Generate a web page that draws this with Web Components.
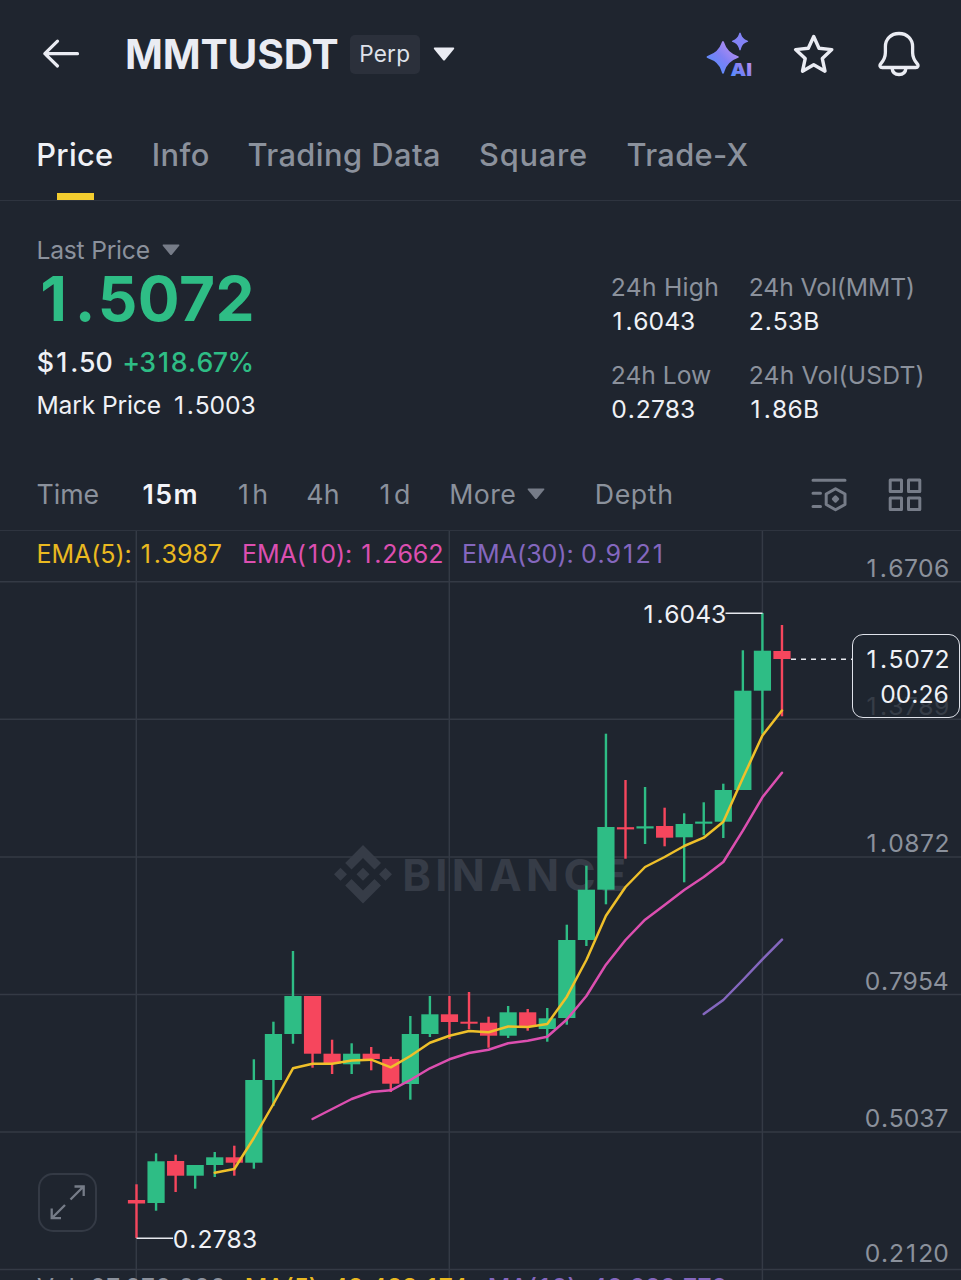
<!DOCTYPE html>
<html lang="en">
<head>
<meta charset="utf-8">
<title>MMTUSDT Perp</title>
<style>
html,body{margin:0;background:#1f252f}
body{width:961px;height:1280px;overflow:hidden}
</style>
</head>
<body>
<market-screen></market-screen>
<script>
const FAMILY = 'Inter, sans-serif';
const ctx = document.createElement('canvas').getContext('2d');

function define(name, html, setup) {
  const tpl = document.createElement('template');
  tpl.innerHTML = html;
  customElements.define(name, class extends HTMLElement {
    constructor() {
      super();
      this.attachShadow({ mode: 'open' }).append(tpl.content.cloneNode(true));
    }
    connectedCallback() { if (setup) setup.call(this, this.shadowRoot); }
  });
}

/* A text whose box is its ink: w = ink width, h = cap height. f="num" widens 1 and . towards a digit's pitch. */
customElements.define('ink-label', class extends HTMLElement {
  constructor() {
    super();
    this.attachShadow({ mode: 'open' }).innerHTML = `<style>
      :host{display:block;flex:none;white-space:pre}
      span{display:block;width:max-content}
      i{font-style:normal;margin:0 .085em}
      b{font-weight:inherit;margin:0 .03em}
    </style><span></span>`;
  }
  connectedCallback() {
    const w = this.getAttribute('w') - 1.2, h = +this.getAttribute('h');
    const wt = this.getAttribute('wt') || 400;
    const num = this.getAttribute('f') === 'num';
    const text = this.getAttribute('t'), n = text.length;
    const s = this.shadowRoot.querySelector('span');
    ctx.font = `${wt} 200px ${FAMILY}`;
    const size = h / (ctx.measureText('H').actualBoundingBoxAscent / 200), k = size / 200;
    s.style.cssText = `font:${wt} ${size}px/${h}px ${FAMILY};`;
    const adv = t => {
      s.innerHTML = num ? t.replace(/1/g, '<i>1</i>').replace(/\./g, '<b>.</b>') : t;
      return s.getBoundingClientRect().width;
    };
    const side = (ch, right) => {
      const m = ctx.measureText(ch), extra = (adv(ch) - m.width * k) / 2;
      return extra + (right ? m.width - m.actualBoundingBoxRight : -m.actualBoundingBoxLeft) * k;
    };
    const l = side(text[0], false), r = side(text[n - 1], true);
    const ls = (w - (adv(text) - l - r)) / (n - 1);
    const m = ctx.measureText(text);
    s.style.letterSpacing = ls + 'px';
    s.style.marginLeft = (0.6 - l) + 'px';
    s.style.transform = `translateY(${h / 2 - (m.fontBoundingBoxAscent - m.fontBoundingBoxDescent) * k / 2 + (h > 18 ? 0.5 : -0.4)}px)`;
    this.style.cssText += `;width:${w + 1.2}px;height:${h}px`;
  }
});

define('drop-caret', `<style>:host{display:block;flex:none}svg{display:block;width:100%;height:100%}</style>
<svg viewBox="0 0 22 14" preserveAspectRatio="none"><path d="M1.5.5h19q1.3.4.5 1.500L12 13q-1 1-2 0L1 2Q.2.9 1.500.5z" fill="currentColor"/></svg>`);

define('screen-header', `<style>
:host{display:flex;align-items:center;height:108px;box-sizing:border-box;padding:0 41px 0 42px;color:#eaecf3}
svg{display:block;flex:none}
.badge{display:flex;align-items:center;justify-content:center;width:70px;height:39px;border-radius:5px;background:#2b303b;margin:0 14px 0 12px;color:#dfe2ea}
drop-caret{width:22px;height:14px}
.grow{flex:1}
</style>
<svg width="38" height="32" viewBox="0 0 38 32" fill="none" stroke="currentColor" stroke-width="3.200" stroke-linecap="round" stroke-linejoin="round"><path d="M35.500 15.700H3M15.500 3.200L2.800 15.700L15.500 28"/></svg>
<ink-label style="margin-left:47px" t="MMTUSDT" w="211" h="29.700" wt="650"></ink-label>
<div class="badge"><ink-label t="Perp" w="49" h="16.500"></ink-label></div>
<drop-caret style="margin-left:-1px"></drop-caret>
<div class="grow"></div>
<svg width="48" height="48" viewBox="0 0 48 48" style="margin:2px 39px 0 0">
<defs><linearGradient id="a" x1="0" y1="1" x2="1" y2="0"><stop offset=".2" stop-color="#5b8cfb"/><stop offset=".5" stop-color="#7f80f5"/><stop offset=".85" stop-color="#b58ff0"/></linearGradient></defs>
<path d="M17 10q1 0 1.600 2.500 2.400 8.500 13 12.500 2.600 1 0 2-10 3.500-13 13Q18 43 17 43t-1.600-3Q13 31 2.500 27.500q-4-1.500 0-3 10-3.500 13-12.500Q16 10 17 10z" fill="url(#a)"/>
<path d="M34 1.500q.7 0 1.200 2 1.200 4 6 6 2 .8 0 1.500-4.800 1.700-6 6-.5 2.500-1.200 2.500t-1.200-2.500q-1.400-4.300-6-6-2-.7 0-1.500 4.600-2 6-6 .5-2 1.200-2z" fill="#8383f6"/>
<text x="24.500" y="45.300" font-family="Inter, sans-serif" font-weight="900" font-size="18" textLength="21.500" lengthAdjust="spacingAndGlyphs" fill="url(#a)">AI</text></svg>
<svg width="42" height="42" viewBox="0 0 42 42" fill="none" stroke="currentColor" stroke-width="3.400" stroke-linejoin="round"><path d="M20.700 3.500L26 15.200L38.800 16.600L29.300 25.600L32 38.200L20.700 31.700L9.500 38.200L12.200 25.600L2.600 16.600L15.300 15.200Z"/></svg>
<svg width="42" height="46" viewBox="0 0 42 46" fill="none" stroke="currentColor" stroke-width="3.300" stroke-linejoin="round" style="margin-left:43px"><path d="M21 2.500c-8.500 0-13.600 6-13.600 13v6c0 5-1.400 7.600-4.700 11.400-1.400 1.700-.6 3.600 1.500 3.600h33.600c2.100 0 2.900-1.900 1.500-3.600-3.300-3.800-4.700-6.400-4.700-11.400v-6c0-7-5.100-13-13.600-13zM14 37c.4 4 3 6.500 7 6.500s6.600-2.500 7-6.500"/></svg>`);

define('nav-tabs', `<style>
:host{display:flex;align-items:flex-start;height:92.500px;box-sizing:border-box;padding:35.300px 0 0 38px;border-bottom:1.500px solid #2e343f;color:#8b919c}
.on{color:#eff1f6;display:flex;flex-direction:column;align-items:center}
.on i{display:block;width:37px;height:7px;background:#f3cd2f;margin-top:27.500px}
</style>
<div class="on"><ink-label t="Price" w="74.500" h="22.500" wt="500"></ink-label><i></i></div>
<ink-label style="margin-left:41px" t="Info" w="55" h="22.500" wt="450"></ink-label>
<ink-label style="margin-left:39.500px" t="Trading Data" w="191" h="22.500" wt="450"></ink-label>
<ink-label style="margin-left:41px" t="Square" w="106.500" h="22.500" wt="450"></ink-label>
<ink-label style="margin-left:40.500px" t="Trade-X" w="121" h="22.500" wt="450"></ink-label>`);

define('price-summary', `<style>
:host{display:flex;justify-content:space-between;height:261px;box-sizing:border-box;padding:0 37px 0 38px;color:#eff1f6}
.row{display:flex;align-items:flex-end}
.left{padding-top:40px}
.muted{color:#8b919c}.up{color:#2ebd85}
drop-caret{width:18px;height:11.500px;color:#767c88;margin:0 0 3.500px 12px}
.stats{display:grid;grid-template-columns:138px 174px;row-gap:35.700px;align-content:start;padding-top:77.500px}
.cell{display:flex;flex-direction:column;gap:16px}
</style>
<div class="left">
<div class="row muted"><ink-label t="Last Price" w="111.500" h="18"></ink-label><drop-caret></drop-caret></div>
<div class="row up" style="margin:16px 0 0 4.500px"><ink-label t="1.5072" w="209.500" h="45.300" wt="650" f="num"></ink-label></div>
<div class="row" style="margin:32.700px 0 0 -.5px"><ink-label t="$1.50" w="74.500" h="19.500" wt="500" f="num"></ink-label><ink-label class="up" style="margin-left:12px" t="+318.67%" w="128" h="19.500" wt="450" f="num"></ink-label></div>
<div class="row" style="margin-top:24px"><ink-label t="Mark Price" w="122.500" h="18"></ink-label><ink-label style="margin-left:14px" t="1.5003" w="80.500" h="18" f="num"></ink-label></div>
</div>
<div class="stats">
<div class="cell"><ink-label class="muted" t="24h High" w="105.500" h="18"></ink-label><ink-label style="margin-left:1px" t="1.6043" w="81.500" h="18" f="num"></ink-label></div>
<div class="cell"><ink-label class="muted" t="24h Vol(MMT)" w="163" h="18"></ink-label><ink-label t="2.53B" w="68.500" h="18" f="num"></ink-label></div>
<div class="cell"><ink-label class="muted" t="24h Low" w="99" h="18"></ink-label><ink-label t="0.2783" w="82.500" h="18" f="num"></ink-label></div>
<div class="cell"><ink-label class="muted" t="24h Vol(USDT)" w="172.500" h="18"></ink-label><ink-label style="margin-left:1px" t="1.86B" w="67.500" h="18" f="num"></ink-label></div>
</div>`);

define('interval-bar', `<style>
:host{display:flex;align-items:center;height:69.500px;box-sizing:border-box;padding:0 39px 2.500px 37px;color:#8b919c;border-bottom:1.500px solid #2e343f}
.on{color:#f3f4f8}
ink-label{margin-bottom:2px}
drop-caret{width:18px;height:11.500px;color:#767c88;margin:0 0 2px 12px}
svg{display:block;flex:none;color:#767c88}
</style>
<ink-label t="Time" w="61.500" h="19.500"></ink-label>
<ink-label class="on" style="margin-left:44.500px" t="15m" w="53.500" h="19.500" wt="600"></ink-label>
<ink-label style="margin-left:42px" t="1h" w="28" h="19.500"></ink-label>
<ink-label style="margin-left:40.500px" t="4h" w="31" h="19.500"></ink-label>
<ink-label style="margin-left:42px" t="1d" w="29" h="19.500"></ink-label>
<ink-label style="margin-left:42px" t="More" w="64" h="19.500"></ink-label><drop-caret></drop-caret>
<ink-label style="margin-left:51.500px" t="Depth" w="75" h="19.500"></ink-label>
<div style="flex:1"></div>
<svg width="36" height="34" viewBox="0 0 36 34" fill="none" stroke="currentColor" stroke-width="3" stroke-linecap="round" stroke-linejoin="round"><path d="M2 2.200h32M2 15.200h7.500M2 28.400h7.500M24.500 10.700L34 16v10.500l-9.500 5.300-9.300-5.300V16z"/><path d="M24.500 18.800l2.200 2.200-2.200 2.200-2.200-2.200z" fill="currentColor"/></svg>
<svg width="34" height="34" viewBox="0 0 34 34" fill="none" stroke="currentColor" stroke-width="3" stroke-linejoin="round" style="margin-left:41px"><path d="M2.200 2h11.300v11.500H2.200zM20.500 2h11.300v11.500H20.500zM2.200 20h11.300v11.500H2.200zM20.500 20h11.300v11.500H20.500z"/></svg>`);

/* Candles: direction, high, body top, body bottom, low (canvas units). */
const CANDLES = [
['r',1184.3,1200,1203.5,1238],['g',1153.3,1161.3,1203,1210.7],['r',1154.7,1161,1175.7,1192],['g',1165,1165,1175.7,1188.7],
['g',1152,1157.3,1165,1177],['r',1145.7,1157.3,1162.7,1175.7],['g',1059.3,1080,1162.7,1168.7],['g',1021.7,1034,1080,1106],
['g',951,996,1034,1043.7],['r',996,996,1053.7,1067.7],['r',1039.7,1053.7,1063.5,1074],['g',1043.3,1053.7,1064.3,1074],
['r',1047,1053.7,1059,1070.3],['r',1056.7,1059,1083.7,1092],['g',1016,1034,1084,1099.7],['g',996,1014.3,1034,1037],
['r',996,1014.3,1022,1039],['r',992,1021.7,1023.7,1029.3],['r',1016.7,1022.7,1035.7,1047.7],['g',1006,1012.3,1035.7,1038],
['r',1009,1012.3,1027,1030.7],['g',1008,1018.3,1029,1041.7],['g',924.7,940,1018,1024.7],['g',865.7,889.7,940,946],
['g',733.7,827,889.7,904.3],['r',780,827.2,829.4,858.7],['g',787,826.3,828.5,844],['r',807.7,826,837.7,846.3],
['g',813.3,824,837.3,882.3],['g',802.3,821.6,823.7,835.3],['g',783.7,790,821.7,838],['g',650.3,690.7,790,790],
['g',613,650.7,690.7,734.3],['r',625,651,659,716.3]];
const LINES = [
['#efc02a',4,[1172.7,1169,1138,1104,1068.3,1063.7,1063.7,1060.5,1059.7,1067.3,1056,1042.7,1035.7,1031,1032.3,1026.5,1027,1024,996.7,960,915.7,887,867,857,846,837.7,821.7,778,735.5,710.5]],
['#dc4fb0',9,[1119,1109,1099,1092,1090.3,1080,1068.3,1059.3,1053,1049.7,1043.3,1040.7,1036.7,1019.5,996,964.7,940,919.7,905,890,877,862,830.7,797.3,772.7]],
['#8467be',29,[1014,1000,980,959.3,939.7]]];

define('price-chart', `<style>
:host{display:block;position:relative;height:749px;overflow:hidden}
svg{position:absolute;left:0;top:0;display:block}
ink-label{position:absolute}
.tag{position:absolute;left:852px;top:103px;width:106px;height:82px;border:1.500px solid #dfe2ea;border-radius:11px;background:rgba(31,37,47,.78)}
.full{position:absolute;left:38px;top:641.500px;width:59px;height:59px;box-sizing:border-box;border:2px solid #343a45;border-radius:15px}
.full svg{left:0;top:0}
</style><svg class="plot" width="961" height="749" viewBox="0 531 961 749"></svg>
<div class="over"></div>`, function (root) {
  const X = i => 136.5 + i * 19.56, V = 531;
  let s = '<g stroke="#343a45" stroke-width="1.500">';
  for (const y of [581.8, 719.3, 857, 994.5, 1132, 1269.4]) s += `<path d="M0 ${y}H961"/>`;
  for (const x of [136.3, 449.3, 762.4]) s += `<path d="M${x} 531V1280"/>`;
  s += '</g>';
  const d = (x, y, r) => `M${x} ${y - r}l${r} ${r}l${-r} ${r}l${-r} ${-r}z`;
  const wm = `<g fill="#363c47"><path d="M363 845L381 863L374.500 869.400L363 857.900L351.500 869.400L345.200 863Z"/><path d="M363 903.500L381 885.500L374.500 879.100L363 890.600L351.500 879.100L345.200 885.500Z"/><path d="${d(340.5, 874.3, 6.5)}${d(363, 874.3, 6.5)}${d(385.5, 874.3, 6.5)}"/></g>`;
  root.querySelector('.plot').innerHTML = s + wm;
  let c = '';
  CANDLES.forEach(([k, hi, t, b, lo], i) => {
    const col = k === 'g' ? '#2ebd85' : '#f6465d', x = X(i);
    c += `<g fill="${col}"><rect x="${x - 1.2}" y="${hi}" width="2.400" height="${lo - hi}"/><rect x="${x - 8.6}" y="${t}" width="17.200" height="${b - t}"/></g>`;
  });
  for (const [col, st, ys] of LINES)
    c += `<polyline fill="none" stroke="${col}" stroke-width="2.500" stroke-linejoin="round" stroke-linecap="round" points="${ys.map((y, i) => X(i + st) + ',' + y).join(' ')}"/>`;
  c += `<g stroke="#e6e8ee" stroke-width="1.500"><path d="M725.500 613.300H762.500M136.500 1238.300H173"/><path d="M791 659.200H852" stroke-dasharray="5 5"/></g>`;
  const L = (t, x, base, w, h, col, wt = 400, f = 'num') =>
    `<ink-label t="${t}" w="${w}" h="${h}" wt="${wt}" f="${f}" style="left:${x}px;top:${base - h - V}px;color:${col}"></ink-label>`;
  const ax = '#8b919c';
  root.querySelector('.over').innerHTML =
    L('BINANCE', 404.5, 890.3, 220, 31.7, '#363c47', 700, 'text') +
    `<svg width="961" height="749" viewBox="0 531 961 749">${c}</svg>` +
    L('EMA(5): 1.3987', 38, 562.3, 183.5, 18.3, '#eab920') +
    L('EMA(10): 1.2662', 243.5, 562.3, 199, 18.3, '#dc4fb0') +
    L('EMA(30): 0.9121', 463.5, 562.3, 198, 18.3, '#8467be') +
    L('1.6706', 867, 577, 81.5, 18, ax) + L('1.3789', 867, 715, 81.5, 18, ax) +
    L('1.0872', 867, 852, 81.5, 18, ax) + L('0.7954', 865.5, 989.7, 82.5, 18, ax) +
    L('0.5037', 865.5, 1126.5, 82.5, 18, ax) + L('0.2120', 865.5, 1262, 82.5, 18, ax) +
    L('1.6043', 644, 622.7, 81.5, 18, '#eff1f6') + L('0.2783', 173.5, 1248.3, 83, 18, '#eff1f6') +
    `<div class="tag"></div>` +
    L('1.5072', 867, 668.3, 81.5, 18, '#eff1f6') + L('00:26', 881, 703, 67, 18, '#eff1f6') +
    L('Vol: 27,272,020', 37, 1295.8, 188, 18, ax) + L('MA(5): 42,423,174', 246, 1295.8, 221, 18, '#eab920', 450) +
    L('MA(10): 42,222,772', 489, 1295.8, 237, 18, '#8467be', 450) +
    `<div class="full"><svg width="55" height="55" viewBox="0 0 55 55" fill="none" stroke="#767c88" stroke-width="2.300"><path d="M30.500 24.500L43.500 11.500M34.500 11.500H43.700V21M25 30L12 43M11.700 33.500V43.200H21"/></svg></div>`;
});

define('market-screen', `<style>:host{display:flex;flex-direction:column;width:961px;height:1280px;overflow:hidden;background:#1f252f}:host>*{flex:none}</style>
<screen-header></screen-header><nav-tabs></nav-tabs><price-summary></price-summary><interval-bar></interval-bar><price-chart></price-chart>`);
</script>
</body>
</html>
